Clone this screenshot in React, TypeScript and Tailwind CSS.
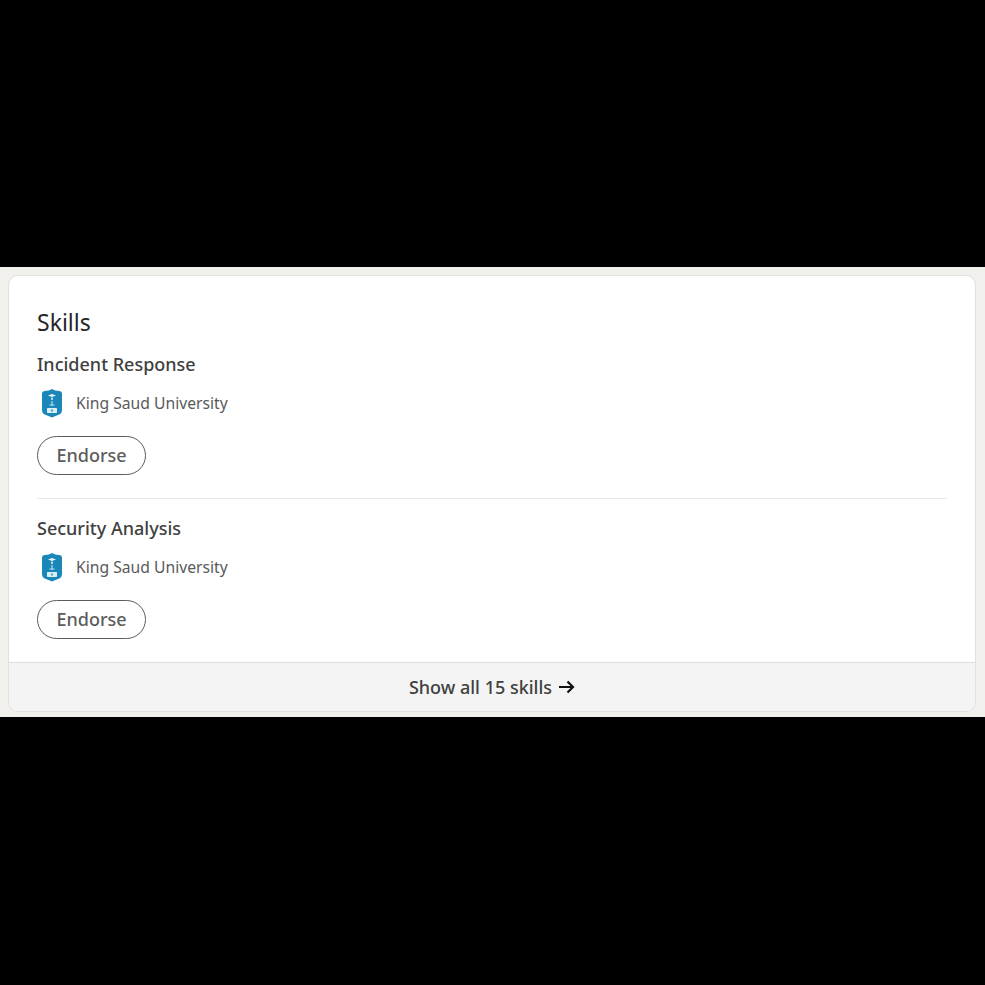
const FONT = "font-['Noto_Sans','Open_Sans',sans-serif]";

function KsuLogo() {
  return (
    <svg width="24" height="30" viewBox="0 1 24 30" className="shrink-0">
      <path d="M5 3 Q9 3 12 1 Q15 3 19 3 Q22 3 22 6 L22 22 Q22 26 18 27 L12 29.5 L6 27 Q2 26 2 22 L2 6 Q2 3 5 3 Z" fill="#1a87b8" />
      <path d="M8 7.5 L12 6 L16 7.5 L12 9 Z" fill="#e8f4f8" />
      <rect x="11.2" y="9.5" width="1.6" height="2.5" fill="#d3e9f2" />
      <path d="M12 13 L12 18 M9.5 17 L14.5 17" stroke="#b9dcea" strokeWidth="1.2" />
      <rect x="7" y="20" width="10" height="5" rx="0.8" fill="#dceef5" />
      <circle cx="12" cy="22.5" r="1.2" fill="#5aa8c9" />
    </svg>
  );
}

function SkillRow({ name, divider }: { name: string; divider?: boolean }) {
  return (
    <div className={divider ? "border-b border-[#e8e8e6] pb-[23px] mb-[16px]" : ""}>
      <div className="h-[26px] text-[18px] leading-[26px] font-medium text-[#404040]">{name}</div>
      <div className="mt-[12px] flex h-[30px] items-center gap-[12px] pl-[3px]">
        <KsuLogo />
        <span className="text-[15.7px] text-[#5a5a5a]">King Saud University</span>
      </div>
      <button className="mt-[17px] block h-[39px] w-[109px] rounded-full border border-[#5c5c5c] bg-white text-[18px] font-medium text-[#5c5c5c]">
        Endorse
      </button>
    </div>
  );
}

export default function App() {
  return (
    <div className={`flex h-[985px] w-[985px] flex-col bg-black ${FONT}`}>
      <div className="h-[267px] shrink-0" />
      <div className="h-[450px] shrink-0 bg-[#f1f0ec] px-[8px] pt-[8px]">
        <div className="flex h-[437px] w-[968px] flex-col overflow-hidden rounded-[10px] border border-[#e2e1de] bg-white">
          <div className="flex-1 px-[28px] pt-[29px]">
            <h2 className="h-[34px] text-[23px] leading-[34px] font-normal text-[#262626]">Skills</h2>
            <div className="mt-[12px]">
              <SkillRow name="Incident Response" divider />
              <SkillRow name="Security Analysis" />
            </div>
          </div>
          <div className="flex h-[49px] shrink-0 items-center justify-center gap-[6px] border-t border-[#dfdfdd] bg-[#f3f4f3] text-[18px] font-medium text-[#404040]">
            <span>Show all 15 skills</span>
            <svg width="17" height="14" viewBox="0 0 17 14" fill="none" stroke="#111111" strokeWidth="2.2">
              <path d="M1 7 H15 M9.5 1.5 L15 7 L9.5 12.5" />
            </svg>
          </div>
        </div>
      </div>
      <div className="flex-1" />
    </div>
  );
}
